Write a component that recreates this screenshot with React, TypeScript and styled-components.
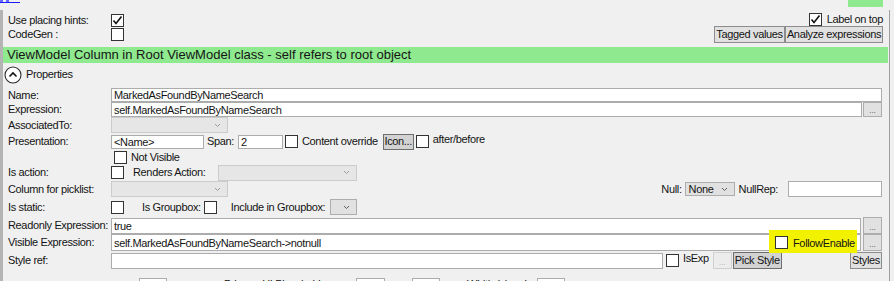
import React from "react";
import styled, { createGlobalStyle } from "styled-components";

const GlobalStyle = createGlobalStyle`
  html, body {
    margin: 0;
    padding: 0;
    background: #f0f0f0;
  }
  body {
    font-family: "Liberation Sans", Arial, sans-serif;
    font-size: 11px;
    color: #141414;
  }
`;

const Page = styled.div`
  width: 894px;
  height: 281px;
  overflow: hidden;
  background: #f0f0f0;
  letter-spacing: -0.35px;
`;

const TopStrip = styled.div`
  height: 10px;
  display: flex;
  justify-content: space-between;
  align-items: flex-start;
  padding-right: 11px;
`;

/* only the underline of the link above is still in view */
const LinkTail = styled.span`
  width: 20px;
  height: 2px;
  border-bottom: 1px solid #1a1aff;
  background: linear-gradient(90deg, #6a6aff 0 3px, transparent 3px 6px, #6a6aff 6px 9px, transparent 9px);
`;

const GreenTab = styled.div`
  width: 35px;
  height: 7px;
  background: #8fe98f;
`;

const Panel = styled.div`
  width: 890px;
  height: 271px;
  box-sizing: border-box;
  border-left: 3px solid #b4b4b4;
  border-right: 1px solid #a0a0a0;
`;

const Header = styled.div`
  display: flex;
  justify-content: space-between;
  height: 37px;
  box-sizing: border-box;
  padding: 3px 6px 0 5px;
`;

const Column = styled.div<{ $end?: boolean }>`
  display: flex;
  flex-direction: column;
  align-items: ${(p) => (p.$end ? "flex-end" : "flex-start")};
`;

const Row = styled.div<{ $h: number }>`
  display: flex;
  align-items: center;
  height: ${(p) => p.$h}px;
`;

const BottomRow = styled.div`
  display: flex;
  align-items: flex-start;
  height: 20px;
  padding-top: 8px;
`;

const Label = styled.span<{ $w?: number }>`
  width: ${(p) => (p.$w ? `${p.$w}px` : "auto")};
  flex-shrink: 0;
  white-space: nowrap;
  line-height: 13px;
`;

const Inline = styled.span<{ $ml?: number; $up?: number }>`
  margin-left: ${(p) => p.$ml ?? 0}px;
  margin-bottom: ${(p) => (p.$up ?? 0) * 2}px;
  white-space: nowrap;
  line-height: 13px;
  flex-shrink: 0;
`;

const Box = styled.span<{ $ml?: number }>`
  width: 13px;
  height: 13px;
  box-sizing: border-box;
  border: 1px solid #333;
  background: #fff;
  margin-left: ${(p) => p.$ml ?? 0}px;
  flex-shrink: 0;
  display: flex;
  align-items: center;
  justify-content: center;
`;

const Btn = styled.span<{ $w: number; $h?: number; $ml?: number; $pressed?: boolean }>`
  width: ${(p) => p.$w}px;
  height: ${(p) => p.$h ?? 17}px;
  margin-left: ${(p) => p.$ml ?? 0}px;
  box-sizing: border-box;
  border: 1px solid ${(p) => (p.$pressed ? "#6e6e6e" : "#8c8c8c")};
  background: ${(p) => (p.$pressed ? "#d2d2d2" : "#e1e1e1")};
  display: flex;
  align-items: center;
  justify-content: center;
  white-space: nowrap;
  flex-shrink: 0;
  line-height: 13px;
`;

const Dots = styled.span<{ $h?: number; $ml?: number; $off?: boolean }>`
  width: 19px;
  height: ${(p) => p.$h ?? 16}px;
  margin-left: ${(p) => p.$ml ?? 1}px;
  box-sizing: border-box;
  border: 1px solid ${(p) => (p.$off ? "#cfcfcf" : "#adadad")};
  background: ${(p) => (p.$off ? "#ececec" : "#e1e1e1")};
  color: ${(p) => (p.$off ? "#a8a8a8" : "#444")};
  display: flex;
  align-items: flex-end;
  justify-content: center;
  font-size: 8px;
  line-height: 11px;
  letter-spacing: 0;
  flex-shrink: 0;
`;

const Text = styled.span<{ $w?: number; $h: number; $ml?: number }>`
  ${(p) => (p.$w ? `width: ${p.$w}px;` : "flex: 1;")}
  height: ${(p) => p.$h}px;
  margin-left: ${(p) => p.$ml ?? 0}px;
  box-sizing: border-box;
  border: 1px solid #acacac;
  background: #fff;
  padding-left: 2px;
  display: flex;
  align-items: center;
  white-space: nowrap;
  overflow: hidden;
  flex-shrink: 0;
`;

const Combo = styled.span<{ $w: number; $h?: number; $ml?: number; $off?: boolean }>`
  width: ${(p) => p.$w}px;
  height: ${(p) => p.$h ?? 16}px;
  margin-left: ${(p) => p.$ml ?? 0}px;
  box-sizing: border-box;
  border: 1px solid ${(p) => (p.$off ? "#cccccc" : "#adadad")};
  background: ${(p) => (p.$off ? "#e6e6e6" : "#e1e1e1")};
  display: flex;
  align-items: center;
  justify-content: space-between;
  padding: 0 6px 0 3px;
  flex-shrink: 0;
`;

const GreenBar = styled.div`
  height: 16px;
  margin-right: 1px;
  background: #8fe98f;
  padding-left: 4px;
  font-size: 13px;
  line-height: 16px;
  letter-spacing: 0;
  white-space: nowrap;
`;

const SectionHead = styled.div`
  height: 20px;
  display: flex;
  align-items: center;
  padding-left: 1px;
  gap: 4px;
  padding-top: 3px;
  box-sizing: border-box;
`;

const Form = styled.div`
  padding: 5px 7px 0 5px;
`;

const Spacer = styled.span`
  flex: 1;
`;

const Field = styled.span`
  flex: 1;
  display: flex;
  position: relative;
  height: 100%;
`;

const Highlight = styled.span`
  position: absolute;
  right: 4px;
  top: -4px;
  width: 88px;
  height: 23px;
  background: #f2f200;
  display: flex;
  align-items: center;
  padding: 2px 0 0 6px;
  box-sizing: border-box;
  gap: 5px;
`;

const Check = () => (
  <svg width="11" height="11" viewBox="0 0 11 11">
    <polyline points="1.5,5.5 4,8.5 9.5,1.5" fill="none" stroke="#111" strokeWidth="1.6" />
  </svg>
);

const Chevron = ({ off }: { off?: boolean }) => (
  <svg width="7" height="5" viewBox="0 0 7 5">
    <polyline points="1,1 3.5,3.5 6,1" fill="none" stroke={off ? "#9a9a9a" : "#606060"} strokeWidth="1" />
  </svg>
);

const CollapseIcon = () => (
  <svg width="18" height="18" viewBox="0 0 18 18">
    <circle cx="9" cy="9" r="8" fill="#fff" stroke="#2a2a2a" strokeWidth="1.1" />
    <polyline points="5.5,10.5 9,7 12.5,10.5" fill="none" stroke="#111" strokeWidth="1.6" />
  </svg>
);

const LW = 103;

export default function App() {
  return (
    <>
      <GlobalStyle />
      <Page>
        <TopStrip>
          <LinkTail />
          <GreenTab />
        </TopStrip>
        <Panel>
          <Header>
            <Column>
              <Row $h={14}>
                <Label $w={LW}>Use placing hints:</Label>
                <Box>
                  <Check />
                </Box>
              </Row>
              <Row $h={14}>
                <Label $w={LW}>CodeGen :</Label>
                <Box />
              </Row>
            </Column>
            <Column $end>
              <Row $h={13}>
                <Box>
                  <Check />
                </Box>
                <Inline $ml={5}>Label on top</Inline>
              </Row>
              <Row $h={17}>
                <Btn $w={71}>Tagged values</Btn>
                <Btn $w={98}>Analyze expressions</Btn>
              </Row>
            </Column>
          </Header>

          <GreenBar>ViewModel Column in Root ViewModel class - self refers to root object</GreenBar>

          <SectionHead>
            <CollapseIcon />
            <Label>Properties</Label>
          </SectionHead>

          <Form>
            <Row $h={14}>
              <Label $w={LW}>Name:</Label>
              <Text $h={14}>MarkedAsFoundByNameSearch</Text>
            </Row>
            <Row $h={15}>
              <Label $w={LW}>Expression:</Label>
              <Text $h={15}>self.MarkedAsFoundByNameSearch</Text>
              <Dots $h={15}>...</Dots>
            </Row>
            <Row $h={16}>
              <Label $w={LW}>AssociatedTo:</Label>
              <Combo $w={117} $off>
                <span />
                <Chevron off />
              </Combo>
            </Row>
            <Row $h={17}>
              <Label $w={LW}>Presentation:</Label>
              <Text $w={93} $h={14}>&lt;Name&gt;</Text>
              <Inline $ml={3}>Span:</Inline>
              <Text $w={45} $h={14} $ml={4}>2</Text>
              <Box $ml={2} />
              <Inline $ml={4}>Content override</Inline>
              <Btn $w={31} $h={16} $ml={5} $pressed>Icon...</Btn>
              <Box $ml={2} />
              <Inline $ml={4} $up={2}>after/before</Inline>
            </Row>
            <Row $h={14}>
              <Label $w={LW + 3} />
              <Box />
              <Inline $ml={4}>Not Visible</Inline>
            </Row>
            <Row $h={17}>
              <Label $w={LW}>Is action:</Label>
              <Box />
              <Label $w={85} style={{ marginLeft: 9 }}>Renders Action:</Label>
              <Combo $w={139} $off>
                <span />
                <Chevron off />
              </Combo>
            </Row>
            <Row $h={16}>
              <Label $w={LW}>Column for picklist:</Label>
              <Combo $w={117} $off>
                <span />
                <Chevron off />
              </Combo>
              <Spacer />
              <Inline>Null:</Inline>
              <Combo $w={50} $h={14} $ml={3}>
                <span>None</span>
                <Chevron />
              </Combo>
              <Inline $ml={4}>NullRep:</Inline>
              <Text $w={94} $h={16} $ml={10} />
            </Row>
            <Row $h={20}>
              <Label $w={LW}>Is static:</Label>
              <Box />
              <Inline $ml={18}>Is Groupbox:</Inline>
              <Box $ml={3} />
              <Inline $ml={14}>Include in Groupbox:</Inline>
              <Combo $w={27} $ml={5}>
                <span />
                <Chevron />
              </Combo>
            </Row>
            <Row $h={17}>
              <Label $w={LW}>Readonly Expression:</Label>
              <Text $h={16}>true</Text>
              <Dots $h={17} $ml={2}>...</Dots>
            </Row>
            <Row $h={17}>
              <Label $w={LW}>Visible Expression:</Label>
              <Field>
                <Text $h={17}>self.MarkedAsFoundByNameSearch-&gt;notnull</Text>
                <Highlight>
                  <Box />
                  <span>FollowEnable</span>
                </Highlight>
              </Field>
              <Dots $h={17} $ml={2}>...</Dots>
            </Row>
            <Row $h={19}>
              <Label $w={LW}>Style ref:</Label>
              <Text $w={552} $h={16} />
              <Box $ml={3} />
              <Inline $ml={4} $up={2}>IsExp</Inline>
              <Dots $h={17} $ml={4} $off>...</Dots>
              <Btn $w={49} $h={17} $ml={1} $pressed>Pick Style</Btn>
              <Spacer />
              <Btn $w={32} $h={17}>Styles</Btn>
            </Row>
            <BottomRow>
              <Text $w={28} $h={16} $ml={131} />
              <Inline $ml={57}>Primary UI Placeholder:</Inline>
              <Text $w={29} $h={16} $ml={24} />
              <Text $w={28} $h={16} $ml={27} />
              <Inline $ml={27}>Width (chars):</Inline>
              <Text $w={28} $h={16} $ml={6} />
            </BottomRow>
          </Form>
        </Panel>
      </Page>
    </>
  );
}
